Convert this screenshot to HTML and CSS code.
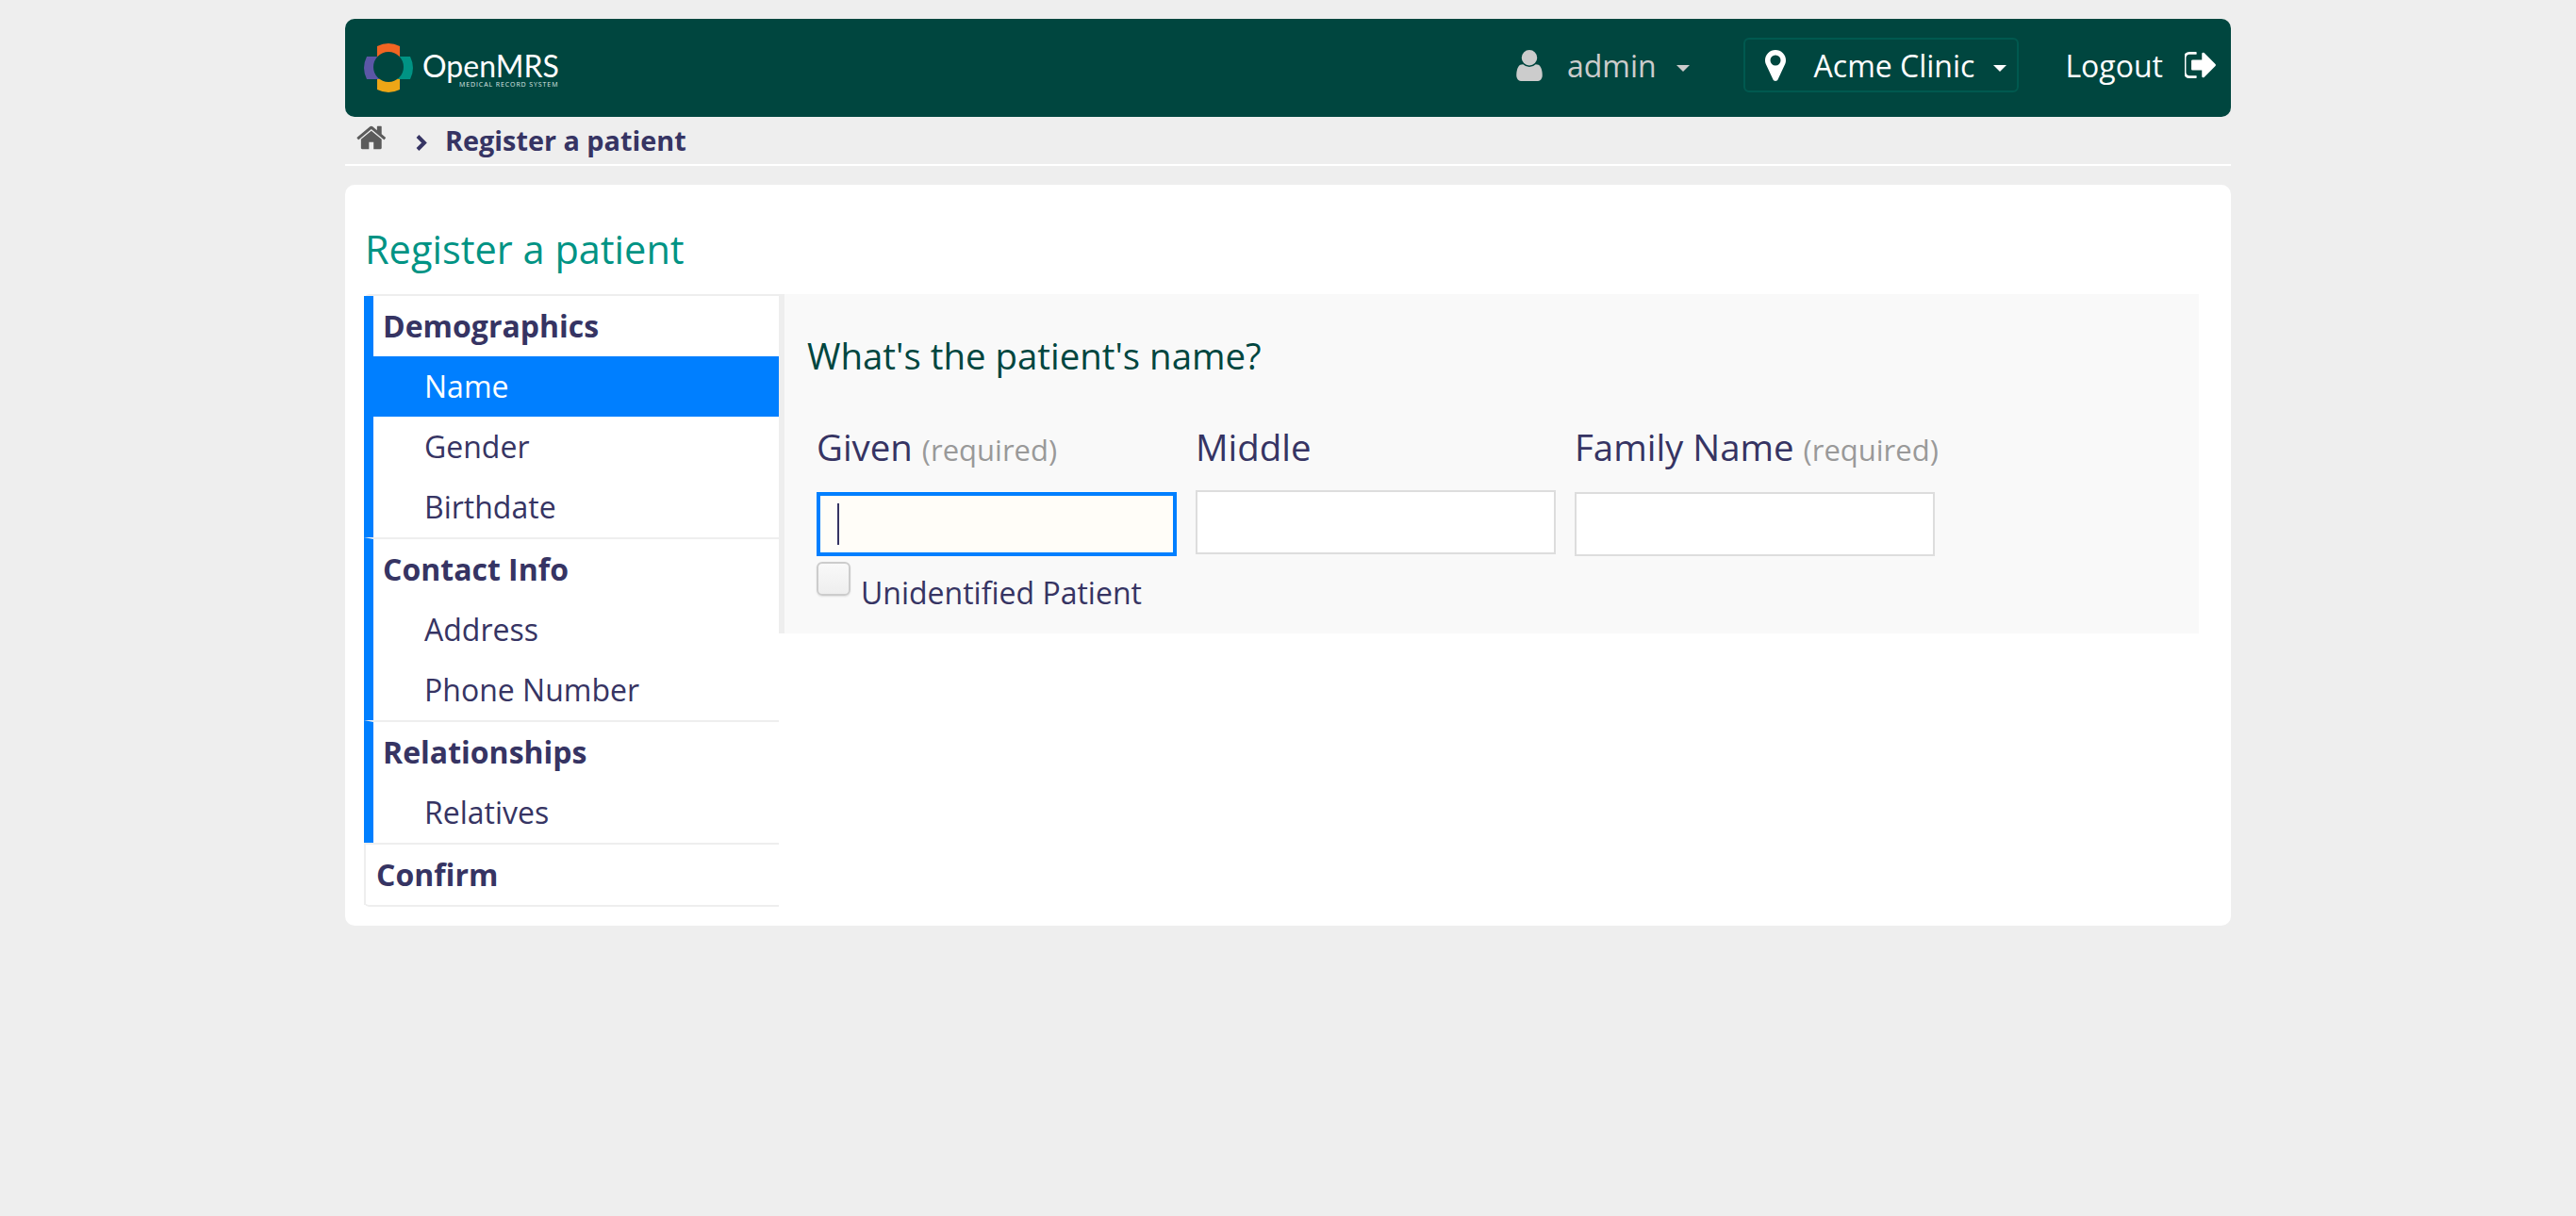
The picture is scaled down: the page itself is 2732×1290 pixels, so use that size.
FILE: index.html
```html
<!DOCTYPE html>
<html lang="en">
<head>
  <meta charset="UTF-8">
  <title>OpenMRS - Register a patient</title>
  <link rel="stylesheet" href="styles.css">
</head>
<body>
  <div class="page">
    <!-- Top bar -->
    <header class="topbar">
      <div class="logo">
        <svg class="logo-mark" viewBox="0 0 52 52">
          <path fill="#f26522" d="M14 3 A27 27 0 0 1 38 3 L38 16 L14 16 Z"/>
          <path fill="#eea616" d="M14 49 A27 27 0 0 0 38 49 L38 36 L14 36 Z"/>
          <path fill="#5b57a6" d="M3 14 A27 27 0 0 0 3 38 L16 38 L16 14 Z"/>
          <path fill="#009384" d="M49 14 A27 27 0 0 1 49 38 L36 38 L36 14 Z"/>
          <circle cx="26" cy="25" r="16" fill="#00463f"/>
        </svg>
        <div class="logo-text">
          <span class="logo-name">OpenMRS</span>
          <span class="logo-sub">MEDICAL RECORD SYSTEM</span>
        </div>
      </div>
      <nav class="topnav">
        <div class="topnav-item user">
          <svg class="icon icon-user" viewBox="256 128 1280 1536"><path fill="currentColor" d="M1536 1399q0 109-62.500 187t-150.500 78h-854q-88 0-150.500-78t-62.500-187q0-85 8.500-160.500t31.500-152 58.500-131 94-89 134.500-34.500q131 128 313 128t313-128q76 0 134.500 34.500t94 89 58.500 131 31.500 152 8.500 160.500zm-256-887q0 159-112.500 271.500t-271.500 112.500-271.500-112.500-112.500-271.500 112.500-271.500 271.500-112.500 271.500 112.500 112.500 271.500z"/></svg>
          <span class="topnav-label">admin</span>
          <span class="caret"></span>
        </div>
        <div class="topnav-item location">
          <svg class="icon icon-pin" viewBox="384 128 1024 1536"><path fill="currentColor" d="M1152 640q0-106-75-181t-181-75-181 75-75 181 75 181 181 75 181-75 75-181zm256 0q0 109-33 179l-364 774q-16 33-47.500 52t-67.500 19-67.500-19-47.500-52l-365-774q-33-70-33-179 0-212 150-362t362-150 362 150 150 362z"/></svg>
          <span class="topnav-label">Acme Clinic</span>
          <span class="caret"></span>
        </div>
        <div class="topnav-item logout">
          <span class="topnav-label">Logout</span>
          <svg class="icon icon-logout" viewBox="128 256 1504 1280"><path fill="currentColor" d="M704 1440q0 4 1 20t.5 26.500-3 23.500-10 19.500-20.500 6.500h-320q-119 0-203.500-84.500t-84.500-203.500v-704q0-119 84.500-203.500t203.500-84.500h320q13 0 22.500 9.500t9.500 22.500q0 4 1 20t.5 26.500-3 23.500-10 19.500-20.500 6.500h-320q-66 0-113 47t-47 113v704q0 66 47 113t113 47h312l11.500 1 11.500 3 8 5.500 7 9 2 13.500zm928-544q0 26-19 45l-544 544q-19 19-45 19t-45-19-19-45v-288h-448q-26 0-45-19t-19-45v-384q0-26 19-45t45-19h448v-288q0-26 19-45t45-19 45 19l544 544q19 19 19 45z"/></svg>
        </div>
      </nav>
    </header>

    <!-- Breadcrumbs -->
    <div class="breadcrumbs">
      <svg class="icon-home" viewBox="0 0 1792 1792"><path fill="currentColor" d="M1408 992v480q0 26-19 45t-45 19h-384v-384h-256v384h-384q-26 0-45-19t-19-45v-480q0-1 .5-3t.5-3l575-474 575 474q1 2 1 6zm223-69l-62 74q-8 9-21 11h-3q-13 0-21-7l-692-577-692 577q-12 8-24 7-13-2-21-11l-62-74q-8-10-7-23.500t11-21.500l719-599q32-26 76-26t76 26l244 204v-195q0-14 9-23t23-9h192q14 0 23 9t9 23v408l219 182q10 8 11 21.500t-7 23.500z"/></svg>
      <svg class="icon-chevron" viewBox="0 0 12 17"><path fill="none" stroke="currentColor" stroke-width="4" d="M2 1.500 L9 8.500 L2 15.500"/></svg>
      <span class="crumb">Register a patient</span>
    </div>

    <!-- Main card -->
    <main class="card">
      <h1 class="card-title">Register a patient</h1>
      <div class="wizard">
        <ul class="steps">
          <li class="step-group active">
            <div class="step-title">Demographics</div>
            <div class="step-item current">Name</div>
            <div class="step-item">Gender</div>
            <div class="step-item">Birthdate</div>
          </li>
          <li class="step-group active">
            <div class="step-title">Contact Info</div>
            <div class="step-item">Address</div>
            <div class="step-item">Phone Number</div>
          </li>
          <li class="step-group active">
            <div class="step-title">Relationships</div>
            <div class="step-item">Relatives</div>
          </li>
          <li class="step-group">
            <div class="step-title">Confirm</div>
          </li>
        </ul>

        <section class="panel">
          <h2 class="question">What's the patient's name?</h2>
          <div class="fields">
            <div class="field">
              <label class="field-label">Given <span class="hint">(required)</span></label>
              <div class="input-wrap">
                <input class="text-input focused" type="text">
                <span class="text-cursor"></span>
              </div>
              <div class="check-row">
                <span class="checkbox"></span>
                <span class="check-label">Unidentified Patient</span>
              </div>
            </div>
            <div class="field field-middle">
              <label class="field-label">Middle</label>
              <input class="text-input" type="text">
            </div>
            <div class="field">
              <label class="field-label">Family Name <span class="hint">(required)</span></label>
              <input class="text-input" type="text">
            </div>
          </div>
        </section>
      </div>
    </main>
  </div>
</body>
</html>
```

FILE: styles.css
```css
body {
  margin: 0;
  background-color: #eeeeee;
  color: #363463;
  font-family: "Open Sans", sans-serif;
  font-size: 32px;
}

.page {
  width: 2000px;
  margin: 0 auto;
  padding-top: 20px;
}

/* Top bar */
.topbar {
  height: 104px;
  background-color: #00463f;
  border-radius: 10px;
  display: flex;
  justify-content: space-between;
  align-items: center;
  color: #fff;
}

.logo {
  display: flex;
  align-items: flex-start;
  margin-left: 20px;
}

.logo-mark {
  width: 52px;
  height: 52px;
}

.logo-text {
  margin-left: 10px;
  margin-top: 9px;
  display: flex;
  flex-direction: column;
  width: 150px;
}

.logo-name {
  font-family: Lato, sans-serif;
  font-weight: 400;
  font-size: 32px;
  line-height: 30px;
}

.logo-sub {
  font-size: 7px;
  line-height: 8px;
  letter-spacing: 0.9px;
  margin-top: 1px;
  margin-left: 39px;
  white-space: nowrap;
  color: #dfe8e6;
}

.topnav {
  display: flex;
  align-items: center;
  margin-bottom: 6px;
}

.topnav-item {
  display: flex;
  align-items: center;
}

.topnav-label {
  line-height: 44px;
  margin-top: 2px;
}

.user {
  color: #cccccc;
  margin-right: 57px;
}

.user .topnav-label {
  margin-left: 25px;
}

.user .caret {
  margin-left: 21px;
}

.location {
  height: 54px;
  padding: 0 11px 0 20px;
  border: 2px solid #00594f;
  border-radius: 6px;
}

.location .topnav-label {
  margin-left: 29px;
}

.location .caret {
  margin-left: 20px;
}

.logout {
  margin-left: 49px;
  margin-right: 16px;
}

.icon-user {
  width: 30px;
  height: 33px;
}

.icon-pin {
  width: 24px;
  height: 33px;
}

.icon-logout {
  width: 33px;
  height: 28px;
  margin-left: 23px;
}

.caret {
  width: 0;
  height: 0;
  margin-top: 6px;
  border-left: 7px solid transparent;
  border-right: 7px solid transparent;
  border-top: 7px solid currentColor;
}

/* Breadcrumbs */
.breadcrumbs {
  height: 50px;
  border-bottom: 2px solid #fff;
  display: flex;
  align-items: center;
  padding-left: 12px;
  font-weight: 700;
  font-size: 28.8px;
}

.icon-home {
  width: 34px;
  height: 34px;
  color: #5b5b5b;
  margin-bottom: 6px;
}

.icon-chevron {
  width: 12px;
  height: 17px;
  margin-left: 29px;
  margin-top: 4px;
}

.crumb {
  margin-left: 19px;
  margin-bottom: 2px;
}

/* Main card */
.card {
  margin-top: 20px;
  background-color: #fff;
  border-radius: 10px;
  padding: 40px 34px 20px 20px;
}

.card-title {
  margin: 0 0 20px 1px;
  font-size: 41.5px;
  font-weight: 400;
  line-height: 56px;
  color: #009384;
}

.wizard {
  display: flex;
  align-items: flex-start;
}

/* Step list */
.steps {
  list-style: none;
  margin: 0;
  padding: 0;
  width: 440px;
  border-top: 2px solid #eeeeee;
  border-bottom: 2px solid #eeeeee;
  border-radius: 6px 0 0 6px;
}

.step-group {
  border-left: 2px solid #eeeeee;
}

.step-group + .step-group {
  border-top: 2px solid #eeeeee;
}

.step-group.active {
  border-left: 10px solid #007fff;
}

.step-title {
  height: 64px;
  line-height: 64px;
  padding-left: 10px;
  font-weight: 700;
}

.step-group:last-child .step-title {
  padding-left: 11px;
}

.step-item {
  height: 64px;
  line-height: 64px;
  padding-left: 54px;
}

.step-item.current {
  background-color: #007fff;
  color: #fff;
}

/* Question panel */
.panel {
  flex: 1;
  height: 360px;
  box-sizing: border-box;
  background-color: #f9f9f9;
  border-left: 6px solid #eeeeee;
  padding: 40px 34px 0;
}

.question {
  margin: 0 0 47px -10px;
  font-size: 38.4px;
  font-weight: 400;
  line-height: 50px;
  color: #00463f;
}

.fields {
  display: flex;
  gap: 20px;
}

.field {
  width: 382px;
}

.field-label {
  display: block;
  height: 50px;
  line-height: 50px;
  margin-bottom: 23px;
  font-size: 38.4px;
  white-space: nowrap;
}

.field-middle .field-label {
  margin-bottom: 21px;
}

.hint {
  font-size: 31px;
  color: #999999;
}

.input-wrap {
  position: relative;
}

.text-input {
  display: block;
  width: 100%;
  height: 68px;
  box-sizing: border-box;
  margin: 0;
  padding: 0 20px;
  background-color: #fff;
  border: 2px solid #dddddd;
  border-radius: 0;
  outline: none;
}

.text-input.focused {
  border: 4px solid #007fff;
  background-color: #fffdf8;
}

.text-cursor {
  position: absolute;
  left: 22px;
  top: 12px;
  width: 2px;
  height: 44px;
  background-color: #363463;
}

.check-row {
  display: flex;
  align-items: flex-start;
  margin-top: 6px;
}

.checkbox {
  flex: none;
  width: 32px;
  height: 32px;
  border: 2px solid #cccccc;
  border-radius: 6px;
  background: linear-gradient(#f9f9f9, #eeeeee);
  box-shadow: 0 1px 2px rgba(0, 0, 0, 0.1);
}

.check-label {
  margin-left: 11px;
  margin-top: 11px;
  line-height: 44px;
  font-size: 32px;
  white-space: nowrap;
}
```
